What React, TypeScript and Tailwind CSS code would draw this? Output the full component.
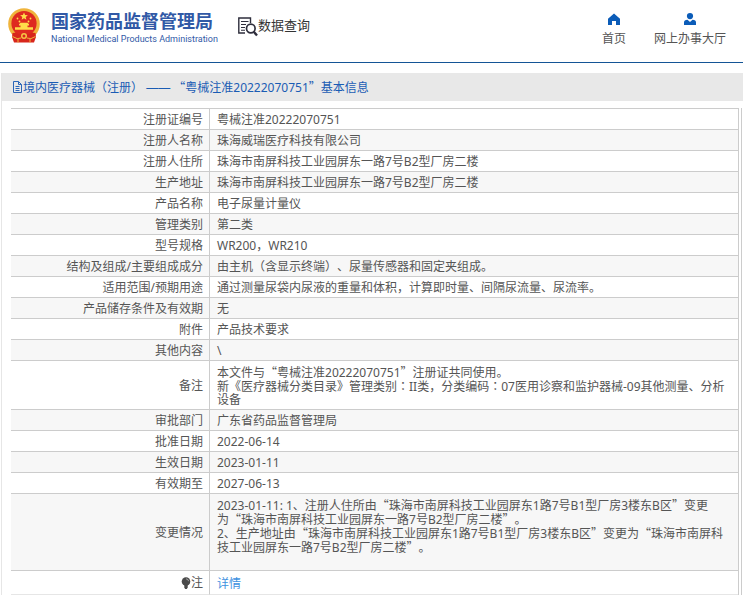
import React from "react";

const CJK = /([“”]|：|—+)/;

function Txt({ children }: { children: string }) {
  return (
    <>
      {children.split(CJK).map((part, i) => {
        if (part === "：") {
          return <span key={i} className="inline-block h-[14px] font-['Noto_Sans_CJK_TC',sans-serif]" lang="zh-TW">{part}</span>;
        }
        if (part.startsWith("—")) {
          return <span key={i} className="font-['Liberation_Sans',sans-serif]">{part}</span>;
        }
        if (i % 2 === 1) {
          return <span key={i} className="inline-block h-[14px] font-['Noto_Sans_CJK_SC',sans-serif]">{part}</span>;
        }
        return <React.Fragment key={i}>{part}</React.Fragment>;
      })}
    </>
  );
}

const rows: { label: string; lines: string[]; height: string }[] = [
  { label: "注册证编号", lines: ["粤械注准20222070751"], height: "h-[21px]" },
  { label: "注册人名称", lines: ["珠海威瑞医疗科技有限公司"], height: "h-[21px]" },
  { label: "注册人住所", lines: ["珠海市南屏科技工业园屏东一路7号B2型厂房二楼"], height: "h-[21px]" },
  { label: "生产地址", lines: ["珠海市南屏科技工业园屏东一路7号B2型厂房二楼"], height: "h-[21px]" },
  { label: "产品名称", lines: ["电子尿量计量仪"], height: "h-[21px]" },
  { label: "管理类别", lines: ["第二类"], height: "h-[21px]" },
  { label: "型号规格", lines: ["WR200，WR210"], height: "h-[21px]" },
  { label: "结构及组成/主要组成成分", lines: ["由主机（含显示终端）、尿量传感器和固定夹组成。"], height: "h-[21px]" },
  { label: "适用范围/预期用途", lines: ["通过测量尿袋内尿液的重量和体积，计算即时量、间隔尿流量、尿流率。"], height: "h-[21px]" },
  { label: "产品储存条件及有效期", lines: ["无"], height: "h-[21px]" },
  { label: "附件", lines: ["产品技术要求"], height: "h-[21px]" },
  { label: "其他内容", lines: ["\\"], height: "h-[21px]" },
  {
    label: "备注",
    lines: [
      "本文件与“粤械注准20222070751”注册证共同使用。",
      "新《医疗器械分类目录》管理类别：II类，分类编码：07医用诊察和监护器械-09其他测量、分析",
      "设备",
    ],
    height: "h-[49px]",
  },
  { label: "审批部门", lines: ["广东省药品监督管理局"], height: "h-[21px]" },
  { label: "批准日期", lines: ["2022-06-14"], height: "h-[21px]" },
  { label: "生效日期", lines: ["2023-01-11"], height: "h-[21px]" },
  { label: "有效期至", lines: ["2027-06-13"], height: "h-[21px]" },
  {
    label: "变更情况",
    lines: [
      "2023-01-11: 1、注册人住所由“珠海市南屏科技工业园屏东1路7号B1型厂房3楼东B区”变更",
      "为“珠海市南屏科技工业园屏东一路7号B2型厂房二楼”。",
      "2、生产地址由“珠海市南屏科技工业园屏东1路7号B1型厂房3楼东B区”变更为“珠海市南屏科",
      "技工业园屏东一路7号B2型厂房二楼”。",
      "",
    ],
    height: "h-[77px]",
  },
];

function Emblem() {
  return (
    <svg viewBox="0 0 32 36" className="h-9 w-8 shrink-0" aria-hidden="true">
      <circle cx="16" cy="16" r="15.8" fill="#f0b43c" />
      <circle cx="16" cy="15.5" r="12.6" fill="#de2a20" />
      <path d="M16 4.5l1.1 2.6 2.8.2-2.2 1.8.7 2.7-2.4-1.5-2.4 1.5.7-2.7-2.2-1.8 2.8-.2z" fill="#ffdc4a" />
      <g fill="#ffdc4a">
        <circle cx="9.5" cy="10.5" r=".9" />
        <circle cx="11.5" cy="13.5" r=".9" />
        <circle cx="20.5" cy="13.5" r=".9" />
        <circle cx="22.5" cy="10.5" r=".9" />
        <path d="M11 16.2l1.5-1.4h7l1.5 1.4v1.2H11zM12.5 17.4h7v1.8h-7zM7 19.2h18v2.6H7z" />
      </g>
      <path d="M4.5 25q3-1 6 1 5.500 1.500 11 0 3-2 6-1l.5 4-2 5.500H6l-2-5.500z" fill="#d8261c" />
      <circle cx="16" cy="28" r="3" fill="#f6c545" />
      <circle cx="16" cy="28" r="1.5" fill="#d8261c" />
      <path d="M4.5 28.5q5 3.500 8.500 1.500M27.5 28.5q-5 3.500-8.500 1.500M10 31v3.500M22 31v3.500" fill="none" stroke="#f0b43c" strokeWidth="1" />
    </svg>
  );
}

function SearchDoc() {
  return (
    <svg viewBox="0 0 20 20" className="mt-px h-5 w-5 shrink-0" fill="none" stroke="#2e2e3c" aria-hidden="true">
      <path d="M7 16H.8V1H12.5v5" strokeWidth="1.4" />
      <path d="M3 4.5h7.5M3 7.5h5M3 10.5h4M3 13.2h4" strokeWidth="1.1" />
      <circle cx="12.8" cy="11.5" r="4.3" strokeWidth="1.7" />
      <path d="M15.8 14.8l3.2 3.7" strokeWidth="2.4" />
    </svg>
  );
}

export default function App() {
  return (
    <div className="bg-white font-['Noto_Sans','Noto_Sans_CJK_SC',sans-serif] text-xs leading-[14px] text-[#555] [text-spacing-trim:space-all]" lang="zh-CN">
      <header className="flex h-[63px] items-start justify-between border-b border-[#145596] pr-[17px] pl-2">
        <div className="flex items-start gap-5">
          <a href="#home" className="flex gap-[11px] pt-2 text-[#3159a6]">
            <Emblem />
            <span className="flex flex-col pt-[2px]">
              <span className="text-[18px] leading-[22px] font-bold">国家药品监督管理局</span>
              <span className="font-['Roboto',sans-serif] text-[9px] leading-[14px] whitespace-nowrap">National Medical Products Administration</span>
            </span>
          </a>
          <a href="#query" className="flex items-start pt-4 text-[13px] leading-[18px] text-[#333]">
            <SearchDoc />
            <span>数据查询</span>
          </a>
        </div>
        <nav className="flex gap-7 pt-[13px] text-[#555]">
          <a href="#index" className="flex flex-col items-center gap-[7px]">
            <svg viewBox="0 0 12 12" className="h-3 w-3" fill="#0b5cb8" aria-hidden="true">
              <path d="M6 .5L0 5.800V12h4V8h4V12h4V5.800z" />
            </svg>
            <span>首页</span>
          </a>
          <a href="#hall" className="flex flex-col items-center gap-[7px]">
            <svg viewBox="0 0 12 12" className="h-3 w-3" fill="#0b5cb8" aria-hidden="true">
              <circle cx="6" cy="3.1" r="3.1" />
              <path d="M0 12V9.5Q0 7 3.5 6.8L6 9l2.5-2.2Q12 7 12 9.5V12z" />
            </svg>
            <span>网上办事大厅</span>
          </a>
        </nav>
      </header>

      <main className="mt-[10px] ml-px border-l border-[#e6e6e6]">
        <h1 className="flex h-7 items-center bg-[#e8e8e8] pl-[10px] text-[#1a5cb4]">
          <svg viewBox="0 0 11 12" className="h-3 w-[11px] shrink-0" fill="none" stroke="#2b66b8" aria-hidden="true">
            <path d="M1.5.5h5l3 3v8h-8zM6.500.5v3h3M3.500 5.500h4M3.500 7.500h4M3.500 9.500h4" />
          </svg>
          <span className="h-[14px] whitespace-nowrap"><Txt>境内医疗器械（注册） —— “粤械注准20222070751”基本信息</Txt></span>
        </h1>
        <div className="mt-[7px] mr-[1px] ml-[9px] border-r border-[#ccc] pr-[2px]">
          <table className="w-full table-fixed border-separate border-spacing-0 border-t border-r border-[#ccc]">
            <colgroup>
              <col className="w-[199px]" />
              <col />
            </colgroup>
            <tbody>
              {rows.map((r, i) => (
                <tr key={r.label} className={`${r.height} ${i % 2 ? "bg-[#f7f7f7]" : "bg-white"}`}>
                  <th scope="row" className="border-r border-b border-[#ccc] pt-1 pb-[2px] pr-[6px] text-right align-middle font-normal">
                    {r.label}
                  </th>
                  <td className="border-b border-[#ccc] pt-1 pb-[2px] pr-1 pl-[7px] align-middle whitespace-nowrap">
                    {r.lines.map((l, j) => (
                      <div key={j} className="h-[14px]"><Txt>{l}</Txt></div>
                    ))}
                  </td>
                </tr>
              ))}
              <tr className="h-6 bg-white">
                <th scope="row" className="border-r border-b border-[#ccc] border-b-[#e6e6e6] pt-[2px] pr-[6px] text-right align-middle font-normal">
                  <span className="inline-flex items-center">
                    <svg viewBox="0 0 10 12" className="h-3 w-[10px]" aria-hidden="true">
                      <circle cx="5" cy="4.500" r="4.300" fill="#4a4a4a" />
                      <path d="M3.300 8h3.400v2.500L5.800 12H4.200l-.9-1.500z" fill="#4a4a4a" />
                      <path d="M5 1.800q2.300.2 2.600 2.400" fill="none" stroke="#bbb" strokeWidth=".8" />
                    </svg>
                    注
                  </span>
                </th>
                <td className="border-b border-[#e6e6e6] pt-[2px] pl-[7px] align-middle">
                  <a href="#detail" className="text-[#3e91e0]">详情</a>
                </td>
              </tr>
            </tbody>
          </table>
        </div>
      </main>
    </div>
  );
}
